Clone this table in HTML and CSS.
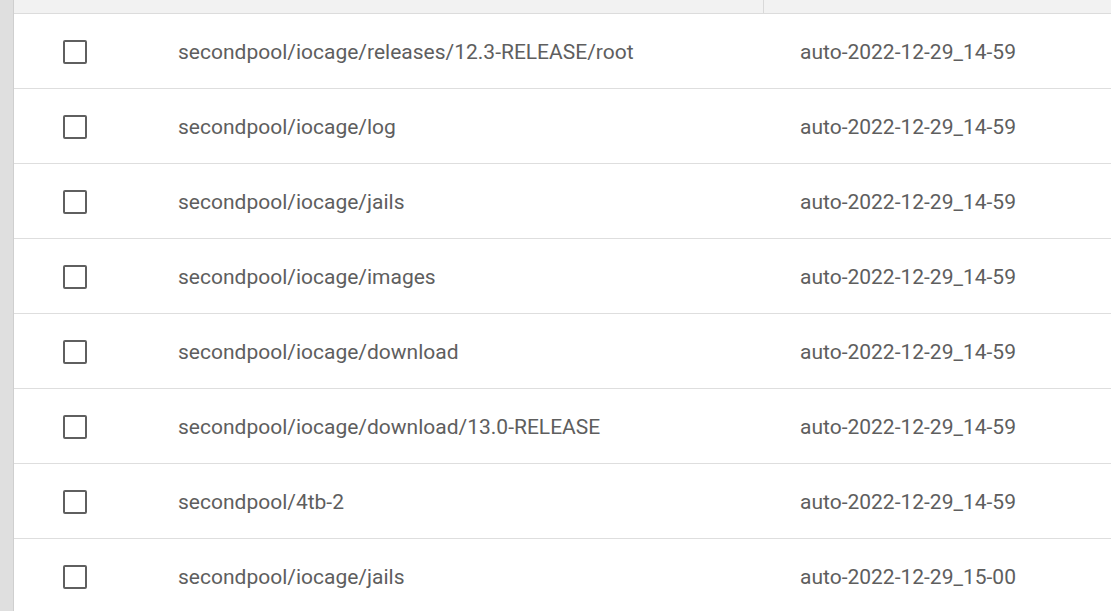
FILE: index.html
```html
<!DOCTYPE html>
<html>
<head>
<meta charset="utf-8">
<link rel="stylesheet" href="styles.css">
</head>
<body>
<div class="page">
  <div class="rail"></div>
  <div class="table">
    <div class="thead">
      <div class="th th-main"></div>
      <div class="th th-rest"></div>
    </div>
    <div class="row"><div class="c-check"><span class="box"></span></div><div class="c-name">secondpool/iocage/releases/12.3-RELEASE/root</div><div class="c-snap">auto-2022-12-29_14-59</div></div>
    <div class="row"><div class="c-check"><span class="box"></span></div><div class="c-name">secondpool/iocage/log</div><div class="c-snap">auto-2022-12-29_14-59</div></div>
    <div class="row"><div class="c-check"><span class="box"></span></div><div class="c-name">secondpool/iocage/jails</div><div class="c-snap">auto-2022-12-29_14-59</div></div>
    <div class="row"><div class="c-check"><span class="box"></span></div><div class="c-name">secondpool/iocage/images</div><div class="c-snap">auto-2022-12-29_14-59</div></div>
    <div class="row"><div class="c-check"><span class="box"></span></div><div class="c-name">secondpool/iocage/download</div><div class="c-snap">auto-2022-12-29_14-59</div></div>
    <div class="row"><div class="c-check"><span class="box"></span></div><div class="c-name">secondpool/iocage/download/13.0-RELEASE</div><div class="c-snap">auto-2022-12-29_14-59</div></div>
    <div class="row"><div class="c-check"><span class="box"></span></div><div class="c-name">secondpool/4tb-2</div><div class="c-snap">auto-2022-12-29_14-59</div></div>
    <div class="row"><div class="c-check"><span class="box"></span></div><div class="c-name">secondpool/iocage/jails</div><div class="c-snap">auto-2022-12-29_15-00</div></div>
  </div>
</div>
</body>
</html>
```
FILE: styles.css
```css
html, body {
  margin: 0;
  padding: 0;
  background: #ffffff;
  height: 100%;
  overflow: hidden;
}
.page {
  display: flex;
  height: 611px;
  font-family: Roboto, "Liberation Sans", sans-serif;
}
.rail {
  width: 13px;
  flex: none;
  background: #dfdfdf;
  border-right: 1px solid #cfcfcf;
}
.table {
  flex: 1;
  display: flex;
  flex-direction: column;
}
.thead {
  display: flex;
  height: 13px;
  background: #f2f2f2;
  border-bottom: 1px solid #dcdcdc;
  flex: none;
}
.th-main {
  width: 749px;
  border-right: 1px solid #d9d9d9;
}
.th-rest {
  flex: 1;
}
.row {
  display: flex;
  align-items: center;
  height: 74px;
  border-bottom: 1px solid #dedede;
  flex: none;
  color: #5e5e5e;
  font-size: 21px;
}
.c-name, .c-snap {
  padding-top: 2px;
}
.c-check {
  width: 164px;
  padding-left: 49px;
  box-sizing: border-box;
  display: flex;
  align-items: center;
}
.box {
  display: block;
  width: 24px;
  height: 24px;
  box-sizing: border-box;
  border: 2px solid #5f5f5f;
  border-radius: 2px;
  margin-top: 2px;
}
.c-name {
  width: 622px;
}
.c-snap {
  flex: 1;
}
```
